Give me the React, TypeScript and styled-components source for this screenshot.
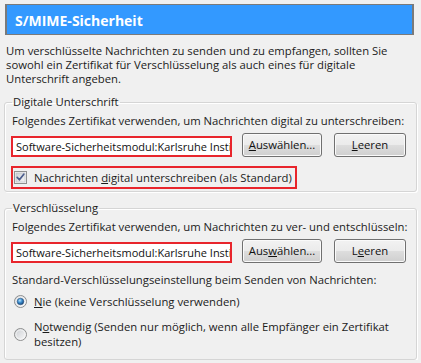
import { FC } from 'react';
import styled, { createGlobalStyle } from 'styled-components';

const GlobalStyle = createGlobalStyle`
  html, body {
    margin: 0;
    padding: 0;
    background: #f0f0f0;
  }
  body {
    font-family: "Open Sans", "Liberation Sans", sans-serif;
    font-size: 11.3px;
    color: #1b1b1b;
  }
`;

const CERT = 'Software-Sicherheitsmodul:Karlsruhe Institute of Technology';

// Vista style checkbox, checked
const CheckBox: FC = () => (
  <svg width="13" height="13" viewBox="0 0 13 13">
    <defs>
      <linearGradient id="cbFill" x1="0" y1="0" x2="1" y2="1">
        <stop offset="0" stopColor="#cbcfd5" />
        <stop offset="1" stopColor="#f6f6f6" />
      </linearGradient>
    </defs>
    <rect x="0.5" y="0.5" width="12" height="12" fill="#f4f4f4" stroke="#8e8f8f" />
    <rect x="2" y="2" width="9" height="9" fill="url(#cbFill)" stroke="#b6bbc2" strokeWidth="0.6" />
    <path d="M3.2 6.4 L5.4 8.8 L9.8 3.2" fill="none" stroke="#4a5c8c" strokeWidth="1.7" strokeLinecap="round" strokeLinejoin="round" />
  </svg>
);

const Radio: FC<{ checked?: boolean }> = ({ checked }) => (
  <svg width="13" height="13" viewBox="0 0 13 13">
    <defs>
      <linearGradient id="rbFill" x1="0" y1="0" x2="1" y2="1">
        <stop offset="0" stopColor="#c9ccd1" />
        <stop offset="1" stopColor="#fbfbfb" />
      </linearGradient>
      <radialGradient id="rbDot" cx="0.4" cy="0.35" r="0.7">
        <stop offset="0" stopColor="#b9e2fb" />
        <stop offset="0.45" stopColor="#3d8fd0" />
        <stop offset="1" stopColor="#123a6a" />
      </radialGradient>
    </defs>
    <circle cx="6.5" cy="6.5" r="6" fill="url(#rbFill)" stroke="#8e8f8f" />
    <circle cx="6.5" cy="6.5" r="4.6" fill="none" stroke="#f8f8f8" strokeWidth="0.8" />
    {checked && <circle cx="6.5" cy="6.5" r="3.3" fill="url(#rbDot)" stroke="#27507e" strokeWidth="0.5" />}
  </svg>
);

const App: FC = (): JSX.Element => {
  return (
    <Page>
      <GlobalStyle />
      <Header>S/MIME-Sicherheit</Header>
      <Intro>
        Um verschlüsselte Nachrichten zu senden und zu empfangen, sollten Sie
        sowohl ein Zertifikat für Verschlüsselung als auch eines für digitale
        Unterschrift angeben.
      </Intro>

      <Group>
        <Legend>Digitale Unterschrift</Legend>
        <Hint>Folgendes Zertifikat verwenden, um Nachrichten digital zu unterschreiben:</Hint>
        <CertRow>
          <CertField readOnly value={CERT} />
          <Button $width={80}><u>A</u>uswählen...</Button>
          <Button $width={72}><u>L</u>eeren</Button>
        </CertRow>
        <CheckRow>
          <CheckBox />
          <span>Nachrichten <u>d</u>igital unterschreiben (als Standard)</span>
        </CheckRow>
      </Group>

      <Group>
        <Legend>Verschlüsselung</Legend>
        <Hint>Folgendes Zertifikat verwenden, um Nachrichten zu ver- und entschlüsseln:</Hint>
        <CertRow>
          <CertField readOnly value={CERT} />
          <Button $width={80}>Aus<u>w</u>ählen...</Button>
          <Button $width={72}>L<u>e</u>eren</Button>
        </CertRow>
        <SubHint>Standard-Verschlüsselungseinstellung beim Senden von Nachrichten:</SubHint>
        <RadioRow $gap={7}>
          <Radio checked />
          <span><u>N</u>ie (keine Verschlüsselung verwenden)</span>
        </RadioRow>
        <RadioRow $gap={10}>
          <Radio />
          <span>N<u>o</u>twendig (Senden nur möglich, wenn alle Empfänger ein Zertifikat<br />besitzen)</span>
        </RadioRow>
      </Group>
    </Page>
  );
};

const Page = styled.div`
  padding: 4px 4px 0 4px;
  width: 413px;
`;

const Header = styled.div`
  margin: 0 3px 0 1px;
  display: flex;
  align-items: center;
  padding: 2px 0 0 8px;
  box-sizing: border-box;
  height: 31px;
  background: #3399ff;
  border-style: solid;
  border-color: #7a7a7a;
  border-width: 1px 2px 1px 2px;
  color: #fff;
  font-weight: 700;
  font-size: 14px;
`;

const Intro = styled.p`
  margin: 9px 0 0 2px;
  max-width: 396px;
  line-height: 14px;
`;

const Group = styled.fieldset`
  margin: 9px 0 0 0;
  padding: 5px 6px 2px 7px;
  border: 1px solid #d5d5d5;
  border-radius: 3px;
  box-shadow: inset 1px 1px 0 #fff, 1px 1px 0 #fff;
  min-width: 0;
`;

const Legend = styled.legend`
  padding: 0 1px;
  margin-left: 0;
  line-height: 14px;
`;

const Hint = styled.div`
  line-height: 14px;
  white-space: nowrap;
`;

const SubHint = styled.div`
  line-height: 14px;
  margin-top: 10px;
`;

const CertRow = styled.div`
  display: flex;
  align-items: flex-end;
  gap: 10px;
  margin-top: 5px;
  margin-left: -1px;
`;

const CertField = styled.input`
  box-sizing: border-box;
  flex: 0 0 221px;
  height: 21px;
  margin: 0;
  padding: 0 0 0 3px;
  border: 2px solid #e8252c;
  background: #fff;
  font-family: "Open Sans", "Liberation Sans", sans-serif;
  font-size: 11px;
  color: #111;
  outline: none;
`;

const Button = styled.button<{ $width: number }>`
  box-sizing: border-box;
  flex: 0 0 ${(p) => p.$width}px;
  height: 24px;
  margin: 0;
  padding: 0 0 1px 0;
  border: 1px solid #707070;
  border-radius: 3px;
  background: linear-gradient(#f2f2f2 0%, #ebebeb 48%, #dddddd 52%, #cfcfcf 100%);
  box-shadow: inset 0 0 0 1px #fafafa;
  font-family: "Open Sans", "Liberation Sans", sans-serif;
  font-size: 11.3px;
  color: #111;
  & + & {
    margin-left: 2px;
  }
`;

const CheckRow = styled.label`
  display: inline-flex;
  align-items: center;
  gap: 7px;
  box-sizing: border-box;
  height: 23px;
  margin: 9px 0 0 -1px;
  padding: 0 3px 0 1px;
  border: 2px solid #e8252c;
  line-height: 14px;
`;

const RadioRow = styled.label<{ $gap: number }>`
  display: flex;
  align-items: center;
  gap: 7px;
  margin-top: ${(p) => p.$gap}px;
  padding-left: 2px;
  line-height: 15px;
  &:last-child {
    margin-bottom: 8px;
  }
`;

export default App;
